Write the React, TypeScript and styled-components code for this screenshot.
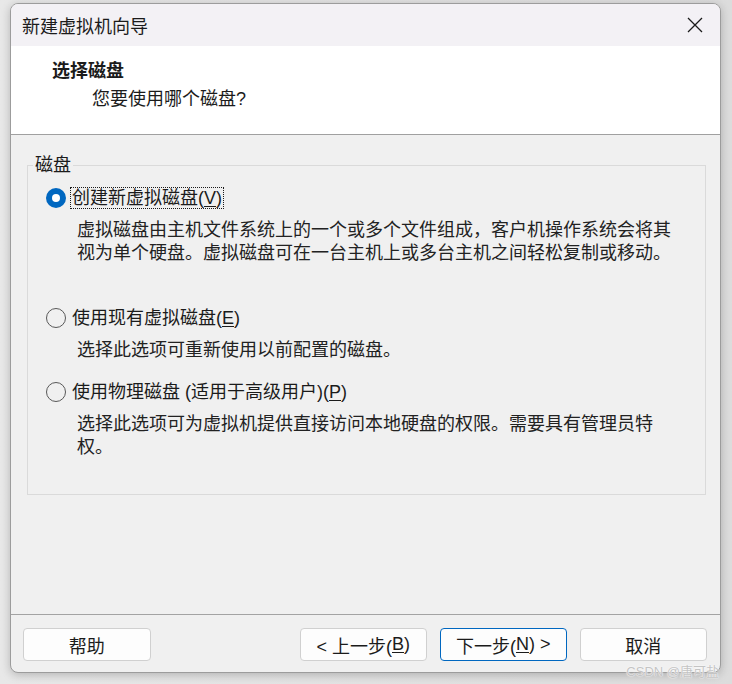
import React from 'react';
import styled, { createGlobalStyle } from 'styled-components';

const font = `"Liberation Sans", "Noto Sans CJK SC", sans-serif`;

const GlobalStyle = createGlobalStyle`
  html, body {
    margin: 0;
    padding: 0;
    background: #e4e4e4;
    font-family: ${font};
    color: #1b1b1b;
  }
`;

const Desktop = styled.div`
  width: 732px;
  height: 684px;
  padding: 3px 0 0 10px;
  box-sizing: border-box;
  position: relative;
  overflow: hidden;
  background: linear-gradient(90deg, #e8e8e8 0%, #dcdcdc 100%);
`;

const Window = styled.div`
  width: 711px;
  height: 670px;
  box-sizing: border-box;
  border: 1px solid #9c9c9c;
  border-radius: 8px;
  overflow: hidden;
  display: flex;
  flex-direction: column;
  background: #f0f0f0;
  box-shadow: 0 2px 10px rgba(0, 0, 0, 0.22);
`;

const TitleBar = styled.div`
  height: 42px;
  flex: none;
  display: flex;
  align-items: center;
  justify-content: space-between;
  padding: 0 16px 0 11px;
  background: #f3f1f5;
  font-size: 18px;
`;

const CloseButton = styled.div`
  width: 18px;
  height: 18px;
  display: flex;
  align-items: center;
  justify-content: center;
`;

const Header = styled.div`
  height: 89px;
  flex: none;
  box-sizing: border-box;
  padding: 13px 0 0 41px;
  background: #ffffff;
  border-bottom: 1px solid #a0a0a0;
`;

const HeaderTitle = styled.div`
  font-size: 18px;
  line-height: 24px;
  font-weight: 700;
`;

const HeaderSub = styled.div`
  font-size: 18px;
  line-height: 24px;
  margin-top: 4px;
  padding-left: 40px;
`;

const Body = styled.div`
  flex: 1;
  padding: 20px 14px 0 16px;
`;

const Group = styled.fieldset`
  margin: 0;
  padding: 0 0 36px 18px;
  height: 340px;
  box-sizing: border-box;
  border: 1px solid #dadada;
`;

const Legend = styled.legend`
  margin-left: -13px;
  padding: 0 2px;
  font-size: 18px;
  line-height: 20px;
`;

const OptionList = styled.div`
  display: flex;
  flex-direction: column;
  gap: 19px;
  padding-top: 12px;
`;

const OptionRow = styled.div`
  display: flex;
  align-items: center;
  height: 22px;
`;

const Radio = styled.span<{ $checked?: boolean }>`
  width: 20px;
  height: 20px;
  box-sizing: border-box;
  border-radius: 50%;
  flex: none;
  display: flex;
  align-items: center;
  justify-content: center;
  border: ${(p) => (p.$checked ? 'none' : '1px solid #585858')};
  background: ${(p) => (p.$checked ? '#0067c0' : 'transparent')};

  &::after {
    content: '';
    display: ${(p) => (p.$checked ? 'block' : 'none')};
    width: 8px;
    height: 8px;
    border-radius: 50%;
    background: #ffffff;
  }
`;

const OptionLabel = styled.span<{ $focused?: boolean }>`
  margin-left: 4px;
  padding: 0 1px;
  font-size: 18px;
  line-height: 20px;
  border: 1px dotted ${(p) => (p.$focused ? '#1b1b1b' : 'transparent')};
`;

const Key = styled.u`
  text-underline-offset: 2px;
`;

const OptionDesc = styled.div<{ $lines: number }>`
  margin: 10px 0 0 31px;
  max-width: 600px;
  font-size: 18px;
  line-height: 23px;
  min-height: ${(p) => p.$lines * 23}px;
  color: #222;
`;

const Footer = styled.div`
  height: 58px;
  flex: none;
  box-sizing: border-box;
  display: flex;
  align-items: flex-start;
  gap: 12.5px;
  padding: 13px 13px 0 12px;
  border-top: 1px solid #a3a3a3;
`;

const Spacer = styled.div`
  flex: 1;
`;

const Button = styled.button<{ $default?: boolean }>`
  width: 127.5px;
  height: 33px;
  box-sizing: border-box;
  border-radius: 4px;
  border: 1px solid ${(p) => (p.$default ? '#0067c0' : '#d0d0d0')};
  background: #fdfdfd;
  font-family: ${font};
  font-size: 18px;
  color: #1b1b1b;
  padding: 0;
  display: flex;
  align-items: center;
  justify-content: center;
`;

const Watermark = styled.div`
  position: absolute;
  right: 13px;
  bottom: 4px;
  font-family: ${font};
  font-size: 13px;
  color: #c4c4c4;
  text-shadow: 0 0 1px #ffffff, 0 0 2px #ffffff;
`;

const options = [
  {
    label: '创建新虚拟磁盘',
    key: 'V',
    desc: '虚拟磁盘由主机文件系统上的一个或多个文件组成，客户机操作系统会将其视为单个硬盘。虚拟磁盘可在一台主机上或多台主机之间轻松复制或移动。',
    checked: true,
    lines: 3,
  },
  {
    label: '使用现有虚拟磁盘',
    key: 'E',
    desc: '选择此选项可重新使用以前配置的磁盘。',
    checked: false,
    lines: 1,
  },
  {
    label: '使用物理磁盘 (适用于高级用户)',
    key: 'P',
    desc: '选择此选项可为虚拟机提供直接访问本地硬盘的权限。需要具有管理员特权。',
    checked: false,
    lines: 2,
  },
];

const App: React.FC = () => {
  return (
    <>
      <GlobalStyle />
      <Desktop>
        <Window>
          <TitleBar>
            <span>新建虚拟机向导</span>
            <CloseButton>
              <svg width="16" height="16" viewBox="0 0 16 16">
                <path d="M1 1 L15 15 M15 1 L1 15" stroke="#1b1b1b" strokeWidth="1.3" fill="none" />
              </svg>
            </CloseButton>
          </TitleBar>
          <Header>
            <HeaderTitle>选择磁盘</HeaderTitle>
            <HeaderSub>您要使用哪个磁盘?</HeaderSub>
          </Header>
          <Body>
            <Group>
              <Legend>磁盘</Legend>
              <OptionList>
                {options.map((opt) => (
                  <div key={opt.key}>
                    <OptionRow>
                      <Radio $checked={opt.checked} />
                      <OptionLabel $focused={opt.checked}>
                        {opt.label}(<Key>{opt.key}</Key>)
                      </OptionLabel>
                    </OptionRow>
                    <OptionDesc $lines={opt.lines}>{opt.desc}</OptionDesc>
                  </div>
                ))}
              </OptionList>
            </Group>
          </Body>
          <Footer>
            <Button>帮助</Button>
            <Spacer />
            <Button>
              &lt; 上一步(<Key>B</Key>)
            </Button>
            <Button $default>
              下一步(<Key>N</Key>) &gt;
            </Button>
            <Button>取消</Button>
          </Footer>
        </Window>
        <Watermark>CSDN @唐可盐</Watermark>
      </Desktop>
    </>
  );
};

export default App;
